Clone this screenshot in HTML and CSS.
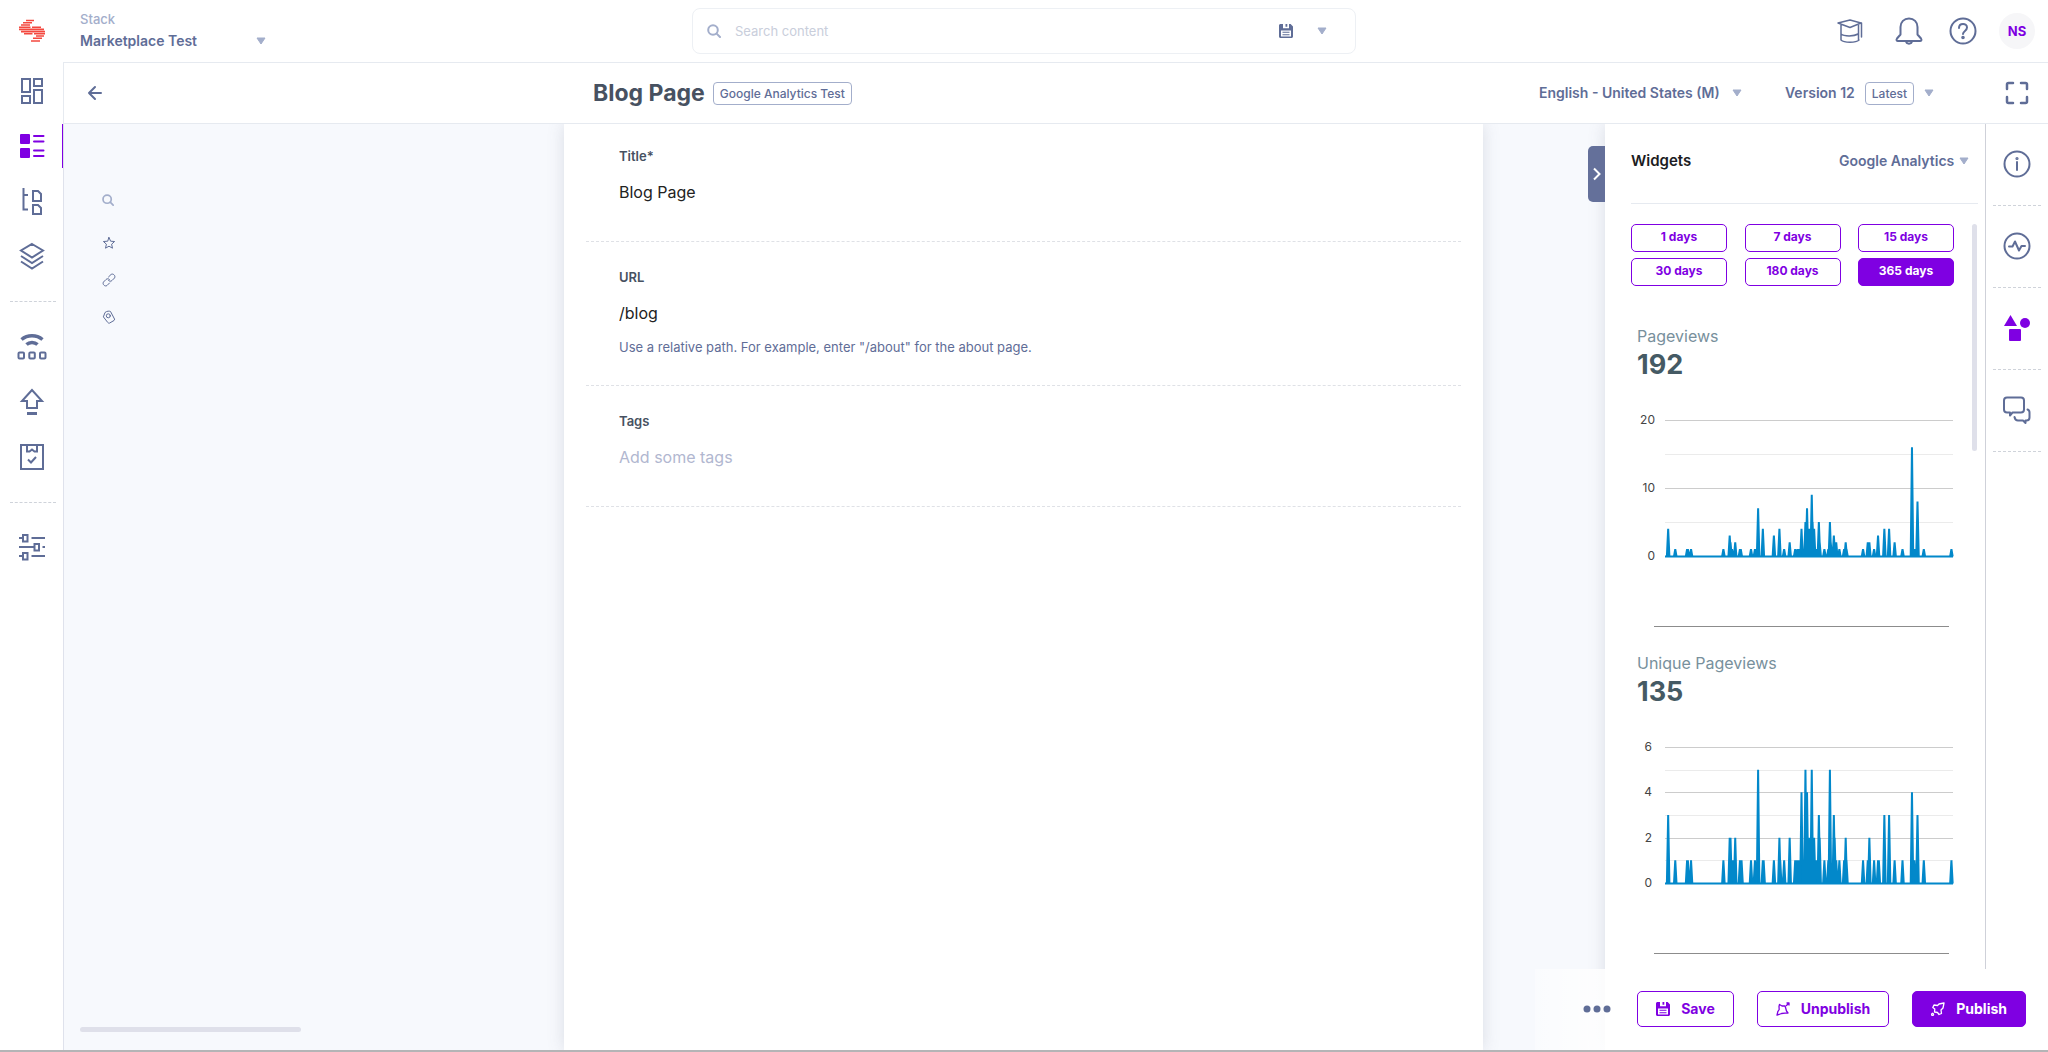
FILE: index.html
```html
<!DOCTYPE html>
<html lang="en">
<head>
<meta charset="utf-8">
<meta name="viewport" content="width=device-width, initial-scale=1">
<title>Blog Page</title>
<link rel="stylesheet" href="styles.css">
</head>
<body>
<svg class="defs" aria-hidden="true">
  <symbol id="caret" viewBox="0 0 10 8"><path d="M1 1h8L5 7z" fill="currentColor" stroke="currentColor" stroke-width="1" stroke-linejoin="round"/></symbol>
  <symbol id="search" viewBox="0 0 14 14"><g fill="none" stroke="currentColor" stroke-width="2" stroke-linecap="round"><circle cx="6" cy="6" r="4.8"/><path d="M9.6 9.6 13 13"/></g></symbol>
  <symbol id="floppy" viewBox="0 0 14 14"><path fill="currentColor" fill-rule="evenodd" d="M1.5 0H4v4.2h6V0h1.600L14 2.400v10.100c0 .8-.7 1.500-1.500 1.500h-11C.7 14 0 13.300 0 12.500v-11C0 .7.7 0 1.500 0zM2 6.500v6h10v-6zM6.500 0h1.800v2.800H6.500zM3.500 7.800h7v1h-7zM3.500 10.200h7v1h-7z"/></symbol>
</svg>

<header class="topbar">
  <div class="brand">
    <a class="logo" href="#" aria-label="Home">
      <svg width="28" height="24" viewBox="0 0 28 24"><path stroke="#f4483f" stroke-width="1.6" d="M8 1.500h8M5 3.800h9M3 6h9M1 8.200h11.500M14 8.200h9M1 10.400h25M3 12.600h24M6 14.800h8.500M16 14.800h11M18 17h8M15 19.200h9M13 22h9"/></svg>
    </a>
    <div class="stack">
      <label class="stack-label" for="stack">Stack</label>
      <div class="picker stack-picker"><select id="stack"><option>Marketplace Test</option></select><svg class="caret"><use href="#caret"/></svg></div>
    </div>
  </div>
  <form class="search">
    <svg class="ico14 pale"><use href="#search"/></svg>
    <input type="search" placeholder="Search content" aria-label="Search content">
    <button type="button" class="plain" aria-label="Saved searches"><svg class="ico14"><use href="#floppy"/></svg></button>
    <button type="button" class="plain" aria-label="Search options"><svg class="caret"><use href="#caret"/></svg></button>
  </form>
  <div class="tools">
    <button class="plain academy" aria-label="Academy"><svg class="line fine" width="28" height="26" viewBox="0 0 28 26"><path d="M2 5 14 2l11 3-11 4.500zM5 7v15c3 3 15 3 18 0M5 7v15M5 16c3 2.500 13 2.500 17 0M22.500 7v15M25.500 5v14"/></svg></button>
    <button class="plain" aria-label="Notifications"><svg class="line" width="28" height="28" viewBox="0 0 28 28"><path d="M14 1.500c-5 0-8.500 3.500-8.500 8.500v7.500L2 21.500c-1 1.300-.3 2.500 1 2.500h22c1.300 0 2-1.200 1-2.500l-3.500-4V10c0-5-3.500-8.500-8.500-8.500zM11 24c.3 3.500 5.700 3.500 6 0"/></svg></button>
    <button class="plain" aria-label="Help"><svg class="line" width="28" height="28" viewBox="0 0 28 28"><circle cx="14" cy="14" r="12.500"/><path d="M10 11c0-5.500 8-5.200 8-.5 0 3.500-4 3.300-4 6.500"/><circle cx="14" cy="20.500" r=".8" fill="currentColor"/></svg></button>
    <button class="avatar">NS</button>
  </div>
</header>

<nav class="sidenav" aria-label="Main">
  <a href="#" aria-label="Dashboard"><svg class="line thick" width="28" height="28" viewBox="0 0 28 28"><path d="M4 2h8v13H4zM16 2h8v7h-8zM16 13h8v13h-8zM4 19h8v7H4z"/></svg></a>
  <a href="#" class="active" aria-label="Entries"><svg width="28" height="28" viewBox="0 0 28 28"><g fill="currentColor"><rect x="2" y="2" width="10" height="10" rx="1"/><rect x="2" y="16" width="10" height="10" rx="1"/></g><path d="M16 4h9.500M16 9.500h9.500M16 18.500h9.500M16 24h9.500" stroke="currentColor" stroke-width="2" stroke-linecap="round"/></svg></a>
  <a href="#" aria-label="Content models"><svg class="line thick" width="28" height="28" viewBox="0 0 28 28"><path d="M5.500 1v21.500H10M5.500 8H10M15 4h5l3 3v7h-8zM15 18h5l3 3v6h-8z"/></svg></a>
  <a href="#" aria-label="Assets"><svg class="line thick" width="28" height="28" viewBox="0 0 28 28"><path d="M14 2 25 8.500 14 15.500 3 8.500zM3 14l11 7 11-7M3 19.500l11 7 11-7"/></svg></a>
  <hr>
  <a href="#" aria-label="Live"><svg width="30" height="28" viewBox="0 0 30 28"><g fill="none" stroke="currentColor"><path d="M4.500 6.500c6-5 15-5 21 0" stroke-width="3.500"/><path d="M9.500 11.500c3-2.800 8-2.800 11 0" stroke-width="3.500"/><g stroke-width="2"><rect x="1.500" y="19.500" width="5.500" height="6" rx="1"/><rect x="12.300" y="19.500" width="5.500" height="6" rx="1"/><rect x="23" y="19.500" width="5.500" height="6" rx="1"/></g></g></svg></a>
  <a href="#" aria-label="Releases"><svg class="line thick" width="28" height="28" viewBox="0 0 28 28"><path d="M14 2 4 13h5v7h10v-7h5z"/><path d="M9 25.500h10" stroke-width="3"/></svg></a>
  <a href="#" aria-label="Tasks"><svg class="line thick" width="28" height="28" viewBox="0 0 28 28"><path d="M3 2h22v24H3zM9 2v6.500h2.500L14 6.500l2.500 2H19V2M10 16.500l3 3 5-5.500"/></svg></a>
  <hr>
  <a href="#" aria-label="Settings"><svg class="line thick" width="28" height="28" viewBox="0 0 28 28"><path d="M1 4h3.500M13.500 4h13.500M5 1h4.500v6.500H5zM1 13h15M16.500 10h4.500v6.500h-4.500zM24.500 13h2.500M1 22h3.500M13.500 22h13.500M5 19h4.500v6.500H5z"/></svg></a>
</nav>

<div class="subbar">
  <a class="back" href="#" aria-label="Back"><svg width="16" height="16" viewBox="0 0 16 16"><path d="M14 8H2M8 2 2 8l6 6" fill="none" stroke="currentColor" stroke-width="2" stroke-linecap="round" stroke-linejoin="round"/></svg></a>
  <div class="heading"><h1>Blog Page</h1><span class="badge">Google Analytics Test</span></div>
  <div class="meta">
    <div class="picker locale"><select aria-label="Locale"><option>English - United States (M)</option></select><svg class="caret"><use href="#caret"/></svg></div>
    <button class="plain version">Version 12 <span class="badge">Latest</span><svg class="caret"><use href="#caret"/></svg></button>
    <button class="plain" aria-label="Full screen"><svg class="line" width="24" height="24" viewBox="0 0 24 24"><path stroke-width="2.500" d="M2 8V3.500C2 2.500 2.500 2 3.500 2H8M16 2h4.500c1 0 1.500.5 1.500 1.500V8M22 16v4.500c0 1-.5 1.500-1.500 1.500H16M8 22H3.500C2.500 22 2 21.500 2 20.500V16"/></svg></button>
  </div>
</div>

<main class="workspace">
  <aside class="outline">
    <div class="outline-tools">
      <button class="plain pale" aria-label="Search fields"><svg class="ico12"><use href="#search"/></svg></button>
      <button class="plain" aria-label="Favourites"><svg class="line thin" width="14" height="14" viewBox="0 0 14 14"><path d="M7 1.500l1.600 3.700 4 .3-3 2.700.9 4L7 10.200 3.500 12.200l.9-4-3-2.700 4-.3z"/></svg></button>
      <button class="plain" aria-label="References"><svg class="line thin" width="14" height="14" viewBox="0 0 14 14"><path d="M6.500 4 9 1.500C11 0 14 2.800 12.500 5L10 7.500C9 8.500 7.500 8.500 6.500 7.500M7.500 10 5 12.500C3 14 0 11.200 1.500 9L4 6.500C5 5.500 6.500 5.500 7.500 6.500"/></svg></button>
      <button class="plain" aria-label="Tags"><svg class="line thin" width="14" height="14" viewBox="0 0 14 14"><path d="M1.500 6.500 3 2.500C5 .8 7.500 1 8.500 1.500l4 7.500c.2.800 0 1.200-.5 1.500l-4.500 2.600c-.5.200-1 .1-1.500-.4z"/><circle cx="6.300" cy="5.800" r="2"/></svg></button>
    </div>
    <div class="outline-scroll"></div>
  </aside>

  <form class="entry">
    <div class="field">
      <label for="f-title">Title*</label>
      <input id="f-title" type="text" value="Blog Page">
    </div>
    <div class="field hinted">
      <label for="f-url">URL</label>
      <input id="f-url" type="text" value="/blog">
      <p>Use a relative path. For example, enter "/about" for the about page.</p>
    </div>
    <div class="field">
      <label for="f-tags">Tags</label>
      <input id="f-tags" type="text" placeholder="Add some tags">
    </div>
  </form>

  <button class="collapse" aria-label="Collapse widgets"><svg width="10" height="14" viewBox="0 0 10 14"><path d="M2 1.500 7.500 7 2 12.500" fill="none" stroke="currentColor" stroke-width="2"/></svg></button>

  <section class="widgets">
    <div class="widgets-head">
      <h2>Widgets</h2>
      <div class="picker"><select aria-label="Widget"><option>Google Analytics</option></select><svg class="caret"><use href="#caret"/></svg></div>
    </div>
    <div class="widgets-body">
      <div class="reports">
        <div class="ranges">
          <button>1 days</button><button>7 days</button><button>15 days</button>
          <button>30 days</button><button>180 days</button><button class="on">365 days</button>
        </div>
        <article class="report">
          <h3>Pageviews</h3>
          <strong>192</strong>
          <svg class="chart" data-series="pageviews" viewBox="0 0 318 230" role="img" aria-label="Pageviews"></svg>
        </article>
        <article class="report">
          <h3>Unique Pageviews</h3>
          <strong>135</strong>
          <svg class="chart" data-series="unique" viewBox="0 0 318 230" role="img" aria-label="Unique pageviews"></svg>
        </article>
      </div>
      <div class="thumb"></div>
    </div>
  </section>

  <nav class="rail" aria-label="Panels">
    <a href="#" aria-label="Information"><svg class="line" width="28" height="28" viewBox="0 0 28 28"><circle cx="14" cy="14" r="12.500"/><path d="M14 12v8"/><circle cx="14" cy="8.500" r=".6" fill="currentColor"/></svg></a>
    <a href="#" aria-label="Activity"><svg class="line" width="28" height="28" viewBox="0 0 28 28"><circle cx="14" cy="14" r="12.500"/><path d="M6 14.500h3.500l2.500-5 4 9 2.500-4.500H22"/></svg></a>
    <a href="#" class="active" aria-label="Widgets"><svg width="28" height="28" viewBox="0 0 28 28" fill="currentColor"><path d="M7.500 1 14 12H1z"/><circle cx="22" cy="9" r="5"/><rect x="6" y="15" width="12" height="12" rx="1"/></svg></a>
    <a href="#" aria-label="Discussion"><svg class="line" width="28" height="28" viewBox="0 0 28 28"><path d="M4 1.500h14c2 0 3 1 3 3v9c0 2-1 3-3 3H9.500L7 19.500V16.500H4c-2 0-3-1-3-3v-9c0-2 1-3 3-3zM24.500 13.500c1.500.5 2 1.500 2 3v5c0 2-1 3-3 3H22.500V27L20 24.500h-5c-2 0-3-1-3.500-3.500"/></svg></a>
  </nav>

  <footer class="actions">
    <button class="plain more" aria-label="More actions"><svg width="28" height="8" viewBox="0 0 28 8" fill="currentColor"><circle cx="4" cy="4" r="3.500"/><circle cx="14" cy="4" r="3.500"/><circle cx="24" cy="4" r="3.500"/></svg></button>
    <button class="btn"><svg class="ico14"><use href="#floppy"/></svg>Save</button>
    <button class="btn"><svg class="line thin" width="14" height="14" viewBox="0 0 14 14"><path stroke-width="1.300" d="M3.500 2.500 6 4l3-.2.800 2.700L10.500 9l1.500 2-3 .2-3.500.3L1 13.200l.8-3.500L3.200 7.500l-.2-3zM10.500 3.500 13 1M13 1h-2M13 1v2"/></svg>Unpublish</button>
    <button class="btn solid"><svg class="line thin" width="14" height="14" viewBox="0 0 14 14"><path stroke-width="1.300" d="M13 1 8 2 6.500 3.500 3 3 1.800 5.500l2 1.500-.3 3 3 .5 1.500 2L10.500 11.500l-.5-3.500L12 6zM1.500 11.500a1 1 0 1 0 .1 0"/></svg>Publish</button>
  </footer>
</main>
<script src="charts.js"></script>
</body>
</html>
```
FILE: styles.css
```css
:root {
  --ink: #475161;
  --slate: #5f6d97;
  --pale: #a3aecb;
  --line: #e6eaf0;
  --accent: #7f00e2;
  --canvas: #f7f9fd;
}

* { box-sizing: border-box; }

body {
  margin: 0;
  min-height: 100vh;
  display: grid;
  grid-template-columns: 63px 1fr;
  grid-template-rows: 62px 62px 1fr;
  border-bottom: 2px solid #b4b4b6;
  background: #fff;
  color: var(--slate);
  font: 14px/20px Inter, "Liberation Sans", sans-serif;
}

button, input, select { font: inherit; color: inherit; }
h1, h2, h3, p { margin: 0; }
svg { display: block; flex: none; }
a { color: inherit; text-decoration: none; }

.defs { position: absolute; width: 0; height: 0; }
.plain { display: flex; align-items: center; padding: 0; border: 0; background: none; }
.caret { width: 10px; height: 8px; color: var(--pale); }
.ico12 { width: 12px; height: 14px; }
.ico14 { width: 14px; height: 14px; }
.pale { color: var(--pale); }
.line { fill: none; stroke: currentColor; stroke-width: 2; stroke-linecap: round; stroke-linejoin: round; }
.line.thick { stroke-linecap: butt; stroke-linejoin: miter; }
.line.fine { stroke-width: 1.5; }
.line.thin { stroke-width: 1; }

.picker { display: flex; align-items: center; gap: 4px; font-weight: 600; }
.picker select { appearance: none; padding: 0; border: 0; background: none; }

.badge {
  height: 23px;
  padding: 0 6px;
  border: 1px solid var(--pale);
  border-radius: 4px;
  font-size: 12px;
  line-height: 21px;
  font-weight: 500;
}

/* Top bar */
.topbar {
  grid-column: 1 / -1;
  display: grid;
  grid-template-columns: 1fr 664px 1fr;
  align-items: center;
}
.brand { display: flex; align-items: center; }
.logo { padding-left: 18px; }
.stack { padding: 0 0 2px 34px; }
.stack-label { display: block; margin-bottom: 2px; color: var(--pale); font-size: 13px; font-weight: 500; }
.stack-picker { width: 186px; justify-content: space-between; }
.search {
  display: flex;
  align-items: center;
  height: 46px;
  padding: 0 28px 0 14px;
  border: 1px solid #edf0f4;
  border-radius: 8px;
}
.search input {
  flex: 1;
  min-width: 0;
  margin-left: 14px;
  padding: 0;
  border: 0;
  outline: 0;
  background: none;
  font-size: 13px;
  appearance: none;
}
.search input::placeholder { color: #c9cedb; }
.search .plain + .plain { margin-left: 24px; }
.tools { display: flex; align-items: center; justify-content: flex-end; gap: 26px; padding-right: 13px; }
.academy { margin-right: 5px; }
.avatar {
  width: 36px;
  height: 36px;
  margin-left: -4px;
  padding: 0;
  border: 0;
  border-radius: 50%;
  background: #f6f6f8;
  color: var(--accent);
  font-size: 13px;
  font-weight: 700;
}

/* Side navigation */
.sidenav { grid-row: 2 / 4; display: flex; flex-direction: column; padding-top: 1px; }
.sidenav a {
  display: grid;
  place-items: center;
  height: 55px;
  padding-left: 1px;
}
.sidenav hr { width: 46px; margin: 18px 0 17px 10px; border: 0; border-top: 1px dashed #cfd3da; }
.active { color: var(--accent); }
.sidenav .active { position: relative; }
.sidenav .active::after {
  content: "";
  position: absolute;
  top: 6px;
  right: -1px;
  width: 2px;
  height: 44px;
  background: var(--accent);
}

/* Entry title bar */
.subbar {
  display: grid;
  grid-template-columns: 500px 1fr auto;
  align-items: center;
  border: solid var(--line);
  border-width: 1px 0 1px 1px;
}
.back { padding-left: 23px; }
.heading { display: flex; align-items: center; gap: 8px; padding-left: 29px; }
h1 { color: var(--ink); font-size: 23px; line-height: 28px; font-weight: 700; }
.meta { display: flex; align-items: center; padding-right: 19px; font-weight: 600; }
.locale { gap: 12px; margin-right: 43px; }
.version { gap: 10px; margin-right: 71px; font-weight: 600; }

/* Workspace */
.workspace {
  position: relative;
  display: grid;
  grid-template-columns: 500px 1fr 122px 380px 63px;
  border-left: 1px solid #dfe2ec;
  background: var(--canvas);
}
.outline { display: flex; flex-direction: column; justify-content: space-between; padding: 69px 16px 18px; }
.outline-tools { display: flex; flex-direction: column; gap: 23px; padding-left: 22px; }
.outline-tools .pale { margin-bottom: 6px; }
.outline-scroll { width: 221px; height: 5px; border-radius: 3px; background: #dfe0ea; }

.entry {
  padding: 0 22px;
  background: #fff;
  box-shadow: 0 0 16px rgba(90, 95, 115, .18);
  clip-path: inset(0 -24px);
}
.field { padding: 25px 33px 33px; border-bottom: 1px dashed #dfe1e6; }
.field:first-child { padding-top: 22px; }
.field.hinted { padding-bottom: 28px; }
.field label { display: block; color: var(--ink); font-size: 13px; font-weight: 600; }
.field input {
  display: block;
  width: 100%;
  height: 32px;
  margin-top: 10px;
  padding: 0;
  border: 0;
  outline: 0;
  background: none;
  color: #222;
  font-size: 16px;
}
.field input::placeholder { color: #b1b7d0; }
.field p { margin-top: 8px; font-size: 13px; }

.collapse {
  z-index: 1;
  display: grid;
  place-items: center;
  align-self: start;
  justify-self: end;
  width: 17px;
  height: 56px;
  margin-top: 22px;
  padding: 0;
  border: 0;
  border-radius: 5px 0 0 5px;
  background: #64709a;
  color: #fff;
}

/* Widgets */
.widgets {
  display: flex;
  flex-direction: column;
  padding: 0 7px 81px 26px;
  background: #fff;
  box-shadow: 0 0 16px rgba(90, 95, 115, .18);
  clip-path: inset(0 0 0 -24px);
}
.widgets-head {
  display: flex;
  align-items: center;
  justify-content: space-between;
  height: 80px;
  padding: 0 9px 6px 0;
  border-bottom: 1px solid var(--line);
}
h2 { color: #1c1c22; font-size: 15px; line-height: 20px; font-weight: 600; }
.widgets-body { display: flex; justify-content: space-between; padding: 20px 1px 0 0; }
.reports { width: 323px; }
.ranges { display: grid; grid-template-columns: repeat(3, 96px); justify-content: space-between; row-gap: 6px; }
.ranges button {
  height: 28px;
  padding: 0 0 2px;
  border: 1px solid var(--accent);
  border-radius: 5px;
  background: #fff;
  color: var(--accent);
  font-size: 12px;
  font-weight: 700;
}
.ranges .on { background: var(--accent); color: #fff; }
.thumb { width: 5px; height: 227px; border-radius: 3px; background: #dfe0ea; }

.report { display: flex; flex-direction: column; height: 327px; padding-left: 6px; }
.ranges + .report { margin-top: 40px; }
.report + .report { height: auto; }
h3 { color: #78909c; font-size: 16px; line-height: 20px; font-weight: 400; }
.report strong { margin: 3px 0 19px; color: #455a64; font-size: 27px; line-height: 32px; font-weight: 700; }
.chart { width: 318px; height: 230px; overflow: visible; }
.chart text { fill: #444; font-size: 12px; text-anchor: end; }
.chart .grid { stroke: #cccccc; }
.chart .grid.minor { stroke: #ebebeb; }
.chart .frame { stroke: #8c8c8c; }
.chart .base { stroke: #0288ca; stroke-width: 2; }
.chart .plot { fill: #0288ca; stroke: #0288ca; stroke-width: 2; stroke-miterlimit: 2; }

/* Right rail */
.rail { padding: 0 7px; border-left: 1px solid #cfd1d9; background: #fff; }
.rail a { display: grid; place-items: center; height: 82px; padding-bottom: 2px; border-bottom: 1px dashed #cfd3da; }

/* Bottom actions */
.actions {
  position: absolute;
  right: 0;
  bottom: 0;
  display: flex;
  align-items: center;
  gap: 23px;
  height: 81px;
  padding: 0 22px 1px 48px;
  background: linear-gradient(90deg, rgba(255, 255, 255, .4), #fff 90px);
}
.btn {
  display: flex;
  align-items: center;
  gap: 11px;
  height: 36px;
  padding: 0 18px;
  border: 1px solid var(--accent);
  border-radius: 5px;
  background: #fff;
  color: var(--accent);
  font-weight: 700;
}
.btn.solid { background: var(--accent); color: #fff; }
.more { margin-right: 3px; }
```
FILE: charts.js
```js
// Daily values over the last year as [day, value]; days left out are zero.
const series = {
  pageviews: {
    max: 20, major: 10, minor: 5,
    points: [[4,4],[13,1],[28,1],[29,1],[33,1],[74,1],[82,3],[83,2],[85,1],[89,2],[95,1],[96,1],[109,1],[114,1],[118,7],[124,4],[138,3],[145,4],[151,1],[158,2],[165,1],[168,1],[170,1],[173,4],[178,5],[180,7],[181,3],[183,4],[186,9],[187,5],[189,4],[192,1],[195,5],[196,2],[202,1],[207,1],[209,5],[210,2],[214,3],[216,2],[217,2],[221,1],[227,1],[229,2],[230,1],[251,1],[257,2],[259,2],[265,1],[270,3],[278,4],[284,4],[291,2],[301,1],[313,16],[316,1],[320,8],[328,1],[363,1]]
  },
  unique: {
    max: 6, major: 2, minor: 1,
    points: [[4,3],[13,1],[28,1],[29,1],[33,1],[74,1],[82,2],[83,2],[86,1],[89,2],[95,1],[97,1],[109,1],[114,1],[118,5],[124,1],[125,1],[138,1],[145,2],[146,1],[151,1],[158,2],[165,1],[167,1],[169,1],[170,1],[173,4],[178,5],[180,4],[181,1],[183,2],[186,5],[187,2],[189,2],[192,1],[195,3],[196,2],[202,1],[207,1],[209,5],[210,1],[214,3],[215,2],[217,1],[221,1],[227,1],[229,2],[230,1],[251,1],[257,1],[259,2],[265,1],[270,1],[271,1],[278,3],[284,3],[291,1],[301,1],[313,4],[316,1],[320,3],[328,1],[363,1]]
  }
};

const LEFT = 28, WIDTH = 288, TOP = 20, HEIGHT = 136, DAYS = 365;
// Half the width of a spike's foot, in days.
const SPREAD = 1.6;

function line(cls, x1, x2, y) {
  return `<line class="${cls}" x1="${x1}" x2="${x2}" y1="${y}" y2="${y}"/>`;
}

for (const svg of document.querySelectorAll(".chart")) {
  const { max, major, minor, points } = series[svg.dataset.series];
  const x = day => (LEFT + WIDTH * Math.min(day, DAYS) / DAYS).toFixed(2);
  const y = v => TOP + HEIGHT * (1 - v / max);
  let out = "";
  for (let v = 0; v <= max; v += minor) {
    const isMajor = v % major === 0;
    out += line(isMajor ? "grid" : "grid minor", LEFT, LEFT + WIDTH, Math.round(y(v)) + 0.5);
    if (isMajor) out += `<text x="${max < 10 ? 15 : 18}" y="${Math.round(y(v)) + 4}">${v}</text>`;
  }
  const base = y(0) + 0.5;
  const spikes = points.map(([day, v]) => `M${x(day - SPREAD)} ${base}L${x(day)} ${y(v).toFixed(1)}L${x(day + SPREAD)} ${base}`);
  out += `<path class="plot" d="${spikes.join("")}"/>`;
  out += line("base", LEFT, LEFT + WIDTH, base);
  out += line("frame", 17, 312, TOP + HEIGHT + 70.5);
  svg.innerHTML = out;
}
```
